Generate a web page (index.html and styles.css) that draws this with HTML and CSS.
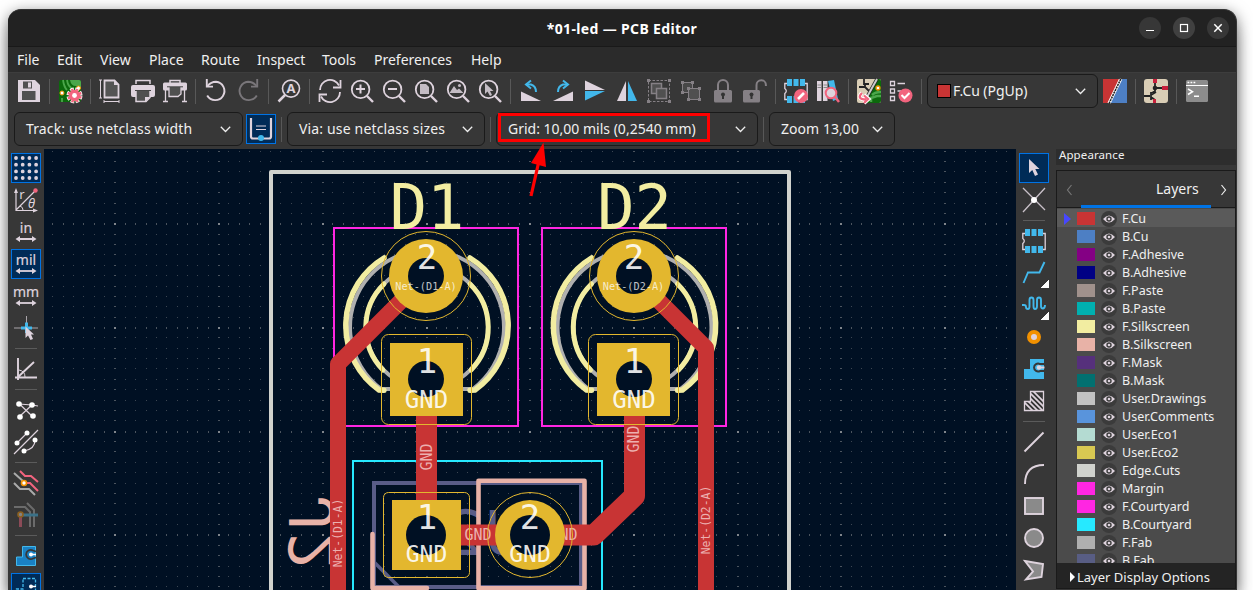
FILE: index.html
```html
<!DOCTYPE html>
<html lang="en">
<head>
<meta charset="utf-8">
<title>PCB Editor</title>
<link rel="stylesheet" href="styles.css">
</head>
<body>
<svg class="defs" width="0" height="0">
  <defs>
    <g id="lens"><circle cx="10.6" cy="10.4" r="8.8" fill="none" stroke="#ded3dd" stroke-width="1.8"/><path d="M17 17l6 6" stroke="#ded3dd" stroke-width="2.4"/></g>
    <g id="harrow"><path d="M3 19.5H21" stroke="#ded3dd" stroke-width="1.8"/><path d="M6 16.5L1.500 19.500L6 22.500ZM18 16.500L22.500 19.500L18 22.500Z" fill="#ded3dd"/></g>
    <g id="chip"><path d="M3.500 4.500H.8V9.500q3 2.500 0 5V20.500H3.500M20.500 4.500H23.200V20.500H20.500" fill="none" stroke="#ded3dd" stroke-width="1.300"/><path d="M3 0H8V7H3ZM9.500 0H14.500V7H9.500ZM16 0H21V7H16ZM3 17H8V24H3ZM9.500 17H14.500V24H9.500ZM16 17H21V24H16Z" fill="#42b8eb"/></g>
    <g id="eye"><circle cx="8" cy="8" r="8" fill="#3b3b3b"/><path d="M2 8Q8 1 14 8Q8 15 2 8Z" fill="#ded3dd"/><circle cx="8" cy="8" r="2.700" fill="#3b3b3b"/><circle cx="8" cy="8" r="1.300" fill="#ded3dd"/></g>
  </defs>
</svg>

<div class="window">
  <header class="titlebar">
    <div class="title">*01-led — PCB Editor</div>
    <div class="controls">
      <span class="ctl"><svg viewBox="0 0 22 22"><path d="M7 13.500H15" stroke="#fff" stroke-width="1.200"/></svg></span>
      <span class="ctl lit"><svg viewBox="0 0 22 22"><rect x="7.500" y="7.500" width="7" height="7" fill="none" stroke="#fff" stroke-width="1.200"/></svg></span>
      <span class="ctl"><svg viewBox="0 0 22 22"><path d="M7.300 7.300L14.700 14.700M14.700 7.300L7.300 14.700" stroke="#fff" stroke-width="1.500"/></svg></span>
    </div>
  </header>
  <nav class="menu"><span>File</span><span>Edit</span><span>View</span><span>Place</span><span>Route</span><span>Inspect</span><span>Tools</span><span>Preferences</span><span>Help</span></nav>

  <div class="toolbar first">
    <svg class="ic" viewBox="0 0 24 24"><path d="M1 1H18L23 6V23H1Z" fill="#ded3dd"/><rect x="5" y="12" width="13.500" height="9" fill="#505050"/><rect x="6" y="2.500" width="9" height="7" fill="#505050"/><rect x="11" y="3.500" width="3" height="5" fill="#ded3dd"/></svg>
    <i class="sep"></i>
    <svg class="ic" viewBox="0 0 24 24"><rect x="1" y="1" width="22" height="22" rx="2" fill="#0c690c"/><path d="M12 1H21Q23 1 23 3V10L18 7Q13 7 12 1Z" fill="#4ba64b"/><path d="M5 1Q6 8 9 11M9 1Q10 8 15 10M4 23V19" stroke="#4ba64b" stroke-width="1.800" fill="none"/><circle cx="4" cy="14" r="2" fill="#fff" stroke="#f29100"/><circle cx="20.500" cy="9" r="2" fill="#fff" stroke="#f29100"/><circle cx="16.500" cy="16.500" r="6.300" fill="none" stroke="#fff" stroke-width="3.400" stroke-dasharray="3.500 1.450"/><circle cx="16.500" cy="16.500" r="5.800" fill="#f2647e"/><circle cx="16.500" cy="16.500" r="6.200" fill="none" stroke="#f2647e" stroke-width="2" stroke-dasharray="2.300 2.570" stroke-dashoffset="-.6"/><circle cx="16.500" cy="16.500" r="2.400" fill="#fff"/></svg>
    <i class="sep"></i>
    <svg class="ic" viewBox="0 0 24 24"><path d="M5.500 1.500H15.500L19.500 5.500V18.500H5.500Z" fill="#545454" stroke="#ded3dd" stroke-width="1.800"/><path d="M15 1V6H20Z" fill="#ded3dd"/><path d="M1.500 1V19M0 1H3M0 19H3M5 22.500H20M5 21V24M20 21V24" stroke="#ded3dd" fill="none"/></svg>
    <svg class="ic" viewBox="0 0 24 24"><path d="M5 5V1.500H19V5" fill="#373737" stroke="#ded3dd" stroke-width="1.500"/><rect y="6" width="24" height="12" rx="2" fill="#ded3dd"/><path d="M4 11.500H20" stroke="#444" stroke-width="1.200"/><path d="M5 12V22.500H15L19 18.500V12" fill="#505050" stroke="#ded3dd" stroke-width="1.500"/><path d="M14 23V18H19Z" fill="#ded3dd"/></svg>
    <svg class="ic" viewBox="0 0 24 24"><path d="M7 4V1.500H17V4" fill="none" stroke="#ded3dd" stroke-width="1.500"/><rect y="3.500" width="24" height="8" rx="1.500" fill="#ded3dd"/><path d="M2.500 11V23M21.500 11V23M0 22.500H5M19 22.500H24" stroke="#ded3dd" stroke-width="1.300"/><path d="M6 8V17.500H15L18 15V8" fill="#505050" stroke="#ded3dd" stroke-width="1.300"/><path d="M4 7.800H20" stroke="#444"/></svg>
    <i class="sep"></i>
    <svg class="ic" viewBox="0 0 24 24"><path d="M3.500 7Q7 2.800 12 2.800A9.200 9.200 0 1 1 3.200 16.500" fill="none" stroke="#ded3dd" stroke-width="1.900"/><path d="M2.800 0V7.600H9" fill="none" stroke="#ded3dd" stroke-width="1.900"/></svg>
    <svg class="ic" viewBox="0 0 24 24"><path d="M20.500 7Q17 2.800 12 2.800A9.200 9.200 0 1 0 20.800 16.500" fill="none" stroke="#79767a" stroke-width="1.900"/><path d="M21.200 0V7.600H15" fill="none" stroke="#79767a" stroke-width="1.900"/></svg>
    <i class="sep"></i>
    <svg class="ic" viewBox="0 0 24 24"><circle cx="14" cy="9.600" r="8.500" fill="none" stroke="#ded3dd" stroke-width="1.600"/><path d="M8 16L1.500 22.500" stroke="#ded3dd" stroke-width="2.500"/><text x="14" y="14.200" class="findA">A</text></svg>
    <i class="sep"></i>
    <svg class="ic" viewBox="0 0 24 24"><path d="M2 11A10 10 0 0 1 21 6.500M22 13A10 10 0 0 1 3 17.500" fill="none" stroke="#ded3dd" stroke-width="1.800"/><path d="M22.500 1V8.500H15M1.500 23V15.500H9" fill="none" stroke="#ded3dd" stroke-width="1.800"/></svg>
    <svg class="ic" viewBox="0 0 24 24"><use href="#lens"/><path d="M6 10H15M10.500 5.500V14.500" stroke="#ded3dd" stroke-width="2"/></svg>
    <svg class="ic" viewBox="0 0 24 24"><use href="#lens"/><path d="M6 10H15" stroke="#ded3dd" stroke-width="2"/></svg>
    <svg class="ic" viewBox="0 0 24 24"><use href="#lens"/><path d="M6 5H12L15 8V15H6Z" fill="#c4bcc4"/></svg>
    <svg class="ic" viewBox="0 0 24 24"><use href="#lens"/><path d="M3.500 14L8 7L11 11L13 9.500L17.500 14Z" fill="#c4bcc4"/><circle cx="13.500" cy="6.500" r="1.500" fill="#c4bcc4"/></svg>
    <svg class="ic" viewBox="0 0 24 24"><use href="#lens"/><path d="M7 4V15L9.500 12.500L12 17L14 16L12 12H15.500Z" fill="#c4bcc4"/></svg>
    <i class="sep"></i>
    <svg class="ic" viewBox="0 0 24 24"><path d="M2 12.500V22H22Z" fill="#ded3dd"/><path d="M8 5.500H12Q17 7 17 13" fill="none" stroke="#42b8eb" stroke-width="2"/><path d="M12 1.500L7 5.500L12 9.500" fill="none" stroke="#42b8eb" stroke-width="2"/></svg>
    <svg class="ic" viewBox="0 0 24 24"><path d="M22 12.500V22H2Z" fill="#ded3dd"/><path d="M16 5.500H12Q7 7 7 13" fill="none" stroke="#42b8eb" stroke-width="2"/><path d="M12 1.500L17 5.500L12 9.500" fill="none" stroke="#42b8eb" stroke-width="2"/></svg>
    <svg class="ic" viewBox="0 0 24 24"><path d="M2 1.500V11H22Z" fill="#ded3dd"/><path d="M2 12V21.500L22 12Z" fill="#42b8eb"/></svg>
    <svg class="ic" viewBox="0 0 24 24"><path d="M11 2V22H2Z" fill="#ded3dd"/><path d="M13 2V22H22Z" fill="#42b8eb"/></svg>
    <svg class="ic" viewBox="0 0 24 24"><rect x="1.500" y="1.500" width="21" height="21" fill="none" stroke="#858085" stroke-dasharray="2.500 1.500"/><path d="M0 0H3V3H0ZM21 0H24V3H21ZM0 21H3V24H0ZM21 21H24V24H21Z" fill="#858085"/><rect x="4.500" y="4.500" width="10" height="10" fill="#505050" stroke="#858085" stroke-width="1.500"/><rect x="9.500" y="9.500" width="10" height="10" fill="#505050" stroke="#858085" stroke-width="1.500"/></svg>
    <svg class="ic" viewBox="0 0 24 24"><rect x="3.500" y="3.500" width="10" height="10" fill="#484848" stroke="#858085"/><rect x="9.500" y="9.500" width="11" height="11" fill="#505050" stroke="#858085"/><path d="M2 2H5V5H2ZM12 2H15V5H12ZM2 12H5V15H2ZM8 8H11V11H8ZM19 8H22V11H19ZM8 19H11V22H8ZM19 19H22V22H19Z" fill="#858085"/></svg>
    <svg class="ic" viewBox="0 0 24 24"><rect x="3" y="11" width="18" height="12.500" rx="1.500" fill="#858085"/><path d="M7 11V6a5 5 0 0 1 10 0V11" fill="none" stroke="#858085" stroke-width="2"/><circle cx="12" cy="15.500" r="2" fill="#333"/><path d="M12 16V20" stroke="#333" stroke-width="2"/></svg>
    <svg class="ic" viewBox="0 0 24 24"><rect y="11" width="17" height="12.500" rx="1.500" fill="#858085"/><path d="M13.500 11V6a4.700 4.700 0 0 1 9.400 0V7" fill="none" stroke="#858085" stroke-width="2"/><circle cx="8.500" cy="15.500" r="2" fill="#333"/><path d="M8.500 16V20" stroke="#333" stroke-width="2"/></svg>
    <i class="sep"></i>
    <svg class="ic" viewBox="0 0 24 24"><use href="#chip"/><circle cx="17" cy="17" r="7" fill="#f2647e"/><path d="M14 20L20 14" stroke="#fff" stroke-width="2.600"/></svg>
    <svg class="ic" viewBox="0 0 24 24"><path d="M1 2H5.500V22H1ZM7 2H11.500V22H7Z" fill="#ded3dd"/><path d="M12 2L18 1L22 20L17 22Z" fill="#42b8eb"/><path d="M1.500 6H5M1.500 8.500H5M7.500 6H11M7.500 8.500H11" stroke="#888"/><circle cx="15" cy="14" r="5.300" fill="#ded3dd" stroke="#f2647e" stroke-width="2"/><path d="M19 18L23 23" stroke="#f2647e" stroke-width="2.500"/></svg>
    <i class="sep"></i>
    <svg class="ic" viewBox="0 0 24 24"><rect width="24" height="24" rx="2" fill="#d9cdb5"/><path d="M20 0H22Q24 0 24 2V22Q24 24 22 24H9L11 18Z" fill="#0c690c"/><path d="M15 16Q18 13 24 13M14 23V19L20 17H24" stroke="#4ba64b" stroke-width="2.500" fill="none"/><path d="M7 0V5H12M2 8H8L12 12M8 5V9" stroke="#222" stroke-width="1.800" fill="none"/><path d="M20 0L10 18" stroke="#222" stroke-width="3.500"/><path d="M20 0L10 18" stroke="#ccc" stroke-width="2"/><circle cx="21" cy="9" r="2" fill="#fff" stroke="#f29100" stroke-width="1.300"/><path d="M5 14Q-1 20 9 20.500M7 16L11.500 20L7 24" fill="none" stroke="#fff" stroke-width="4"/><path d="M5 14Q-1 20 9 20.500M7 16.500L11 20L7 24" fill="none" stroke="#f2647e" stroke-width="2.300"/></svg>
    <svg class="ic" viewBox="0 0 24 24"><path d="M1.500 2.500H5.500V6.500H1.500ZM1.500 10H5.500V14H1.500ZM1.500 17.500H5.500V21.500H1.500Z" fill="none" stroke="#ded3dd" stroke-width="1.300"/><path d="M8.500 4.500H16M8.500 12H12" stroke="#ded3dd" stroke-width="1.500"/><circle cx="16.500" cy="16.500" r="7" fill="#f2647e"/><path d="M12.500 16L15.500 19L20.500 14" fill="none" stroke="#fff" stroke-width="2"/></svg>
    <i class="sep"></i>
    <div class="combo layer"><b class="chip"></b><span>F.Cu (PgUp)</span><svg class="chev" viewBox="0 0 11 7"><path d="M.8 .8L5.500 5.500L10.200 .8"/></svg></div>
    <svg class="ic pair" viewBox="0 0 24 24"><path d="M0 0H17L5 24H0Z" fill="#c83434"/><path d="M19 0H24V24H7Z" fill="#4d7fc4"/><path d="M16.500 0L5 24" stroke="#fff" stroke-width="1.100"/><path d="M18.300 0L6.800 24" stroke="#fff" stroke-width="2"/><path d="M17.800 0L6.300 24" stroke="#222" stroke-width="1.500" stroke-dasharray="2 .8"/></svg>
    <i class="sep"></i>
    <svg class="ic" viewBox="0 0 24 24"><rect width="24" height="24" rx="3" fill="#d9cdb5"/><path d="M11 3V9M11 9H19M11 7V12L8 14M0 17H6M7 13V21M7 16L12 13M7 18L11 21V24" stroke="#222" stroke-width="1.800" fill="none"/><path d="M9 0H13V4H9ZM18 7H24V11H18ZM9 20H12V24H9Z" fill="#c8203c"/><circle cx="11" cy="9" r="2.300" fill="#222"/></svg>
    <i class="sep"></i>
    <svg class="ic" viewBox="0 0 24 24"><rect x="1" y="1" width="22" height="22" rx="1.500" fill="#8c8c8c"/><path d="M1 6.500H23" stroke="#fff" stroke-width="1.200"/><path d="M2.500 3.500H11" stroke="#fff" stroke-width="1.700" stroke-dasharray="1.800 1.200"/><path d="M3 10L7.500 12.700L3 15.500M9 17.300H14" stroke="#fff" stroke-width="1.500" fill="none"/></svg>
  </div>

  <div class="toolbar second">
    <div class="combo track"><span>Track: use netclass width</span><svg class="chev" viewBox="0 0 11 7"><path d="M.8 .8L5.500 5.500L10.200 .8"/></svg></div>
    <div class="btn on"><svg class="ic" viewBox="0 0 24 24"><path d="M2 1V19.500Q2 21.500 4 21.500H20Q22 21.500 22 19.500V1" fill="none" stroke="#ded3dd" stroke-width="2.200"/><path d="M7 9H17M7 12.500H17" stroke="#ded3dd" stroke-width="1.200"/><circle cx="12" cy="21" r="3" fill="#42b8eb"/></svg></div>
    <i class="sep"></i>
    <div class="combo via"><span>Via: use netclass sizes</span><svg class="chev" viewBox="0 0 11 7"><path d="M.8 .8L5.500 5.500L10.200 .8"/></svg></div>
    <i class="sep"></i>
    <div class="combo grid"><span>Grid: 10,00 mils (0,2540 mm)</span><svg class="chev" viewBox="0 0 11 7"><path d="M.8 .8L5.500 5.500L10.200 .8"/></svg></div>
    <i class="sep"></i>
    <div class="combo zoom"><span>Zoom 13,00</span><svg class="chev" viewBox="0 0 11 7"><path d="M.8 .8L5.500 5.500L10.200 .8"/></svg></div>
  </div>

  <main class="work">
    <aside class="side left">
      <div class="btn on"><svg class="ic" viewBox="0 0 24 24"><g stroke="#ded3dd" stroke-width="3.800" stroke-linecap="round" stroke-dasharray="0 6.700"><path d="M2 2H23"/><path d="M2 8.700H23"/><path d="M2 15.400H23"/><path d="M2 22H23"/></g></svg></div>
      <div class="btn"><svg class="ic" viewBox="0 0 24 24"><path d="M2 2V22.500H22M2 22L21 3" fill="none" stroke="#ded3dd" stroke-width="1.200"/><path d="M0 5L2 0L4 5ZM19 20.500L24 22.500L19 24.500Z" fill="#ded3dd"/><circle cx="21.500" cy="2.500" r="2.200" fill="#f2647e"/><path d="M6 18Q9 19 9 22" stroke="#ded3dd" fill="none"/><text x="8" y="11" class="polar">r</text><text x="17.500" y="20" class="polar theta">θ</text></svg></div>
      <div class="btn"><svg class="ic" viewBox="0 0 24 24"><text x="12" y="12.500" class="unit">in</text><use href="#harrow" y="-.5"/></svg></div>
      <div class="btn on"><svg class="ic" viewBox="0 0 24 24"><text x="12" y="12.500" class="unit">mil</text><use href="#harrow" y="-.5"/></svg></div>
      <div class="btn"><svg class="ic" viewBox="0 0 24 24"><text x="12" y="12.500" class="unit">mm</text><use href="#harrow" y="-.5"/></svg></div>
      <div class="btn"><svg class="ic" viewBox="0 0 24 24"><path d="M0 12H24M12.500 0V12" stroke="#aaa5aa"/><path d="M7 12H18M12.500 6.500V17" stroke="#42b8eb" stroke-width="3"/><path d="M11.500 10.500V22L14 19.500L16.500 24L19 23L17 18.500H20Z" fill="#ded3dd"/></svg></div>
      <i class="hsep"></i>
      <div class="btn"><svg class="ic" viewBox="0 0 24 24"><path d="M4 1V23M1 20.500H23M4 20L20 5" fill="none" stroke="#ded3dd" stroke-width="1.900"/><path d="M5 13Q11 14 11 20" fill="none" stroke="#ded3dd"/></svg></div>
      <i class="hsep"></i>
      <div class="btn"><svg class="ic" viewBox="0 0 24 24"><path d="M5 5.500L18 18M5 6L18 7L24 8M6 18L18 7" stroke="#ded3dd" stroke-width="1.200" fill="none"/><g fill="#fff"><circle cx="5" cy="6" r="2.800"/><circle cx="18" cy="7" r="2.800"/><circle cx="6" cy="19" r="2.800"/><circle cx="19" cy="18" r="2.800"/></g></svg></div>
      <div class="btn"><svg class="ic" viewBox="0 0 24 24"><path d="M0 24L24 0M3 13L13 3M21 10Q21 19 10 21" stroke="#ded3dd" stroke-width="1.200" fill="none"/><g fill="#fff"><circle cx="3" cy="13" r="2.500"/><circle cx="13" cy="3" r="2.500"/><circle cx="21" cy="10" r="2.500"/><circle cx="10" cy="21" r="2.500"/></g></svg></div>
      <i class="hsep"></i>
      <div class="btn"><svg class="ic" viewBox="0 0 24 24"><path d="M0 2L10 11M0 12L6 18H15L21 24" fill="none" stroke="#aaa" stroke-width="2"/><path d="M6 0L11 5H17L24 11M11 12H16L24 20" fill="none" stroke="#f2647e" stroke-width="2"/><circle cx="10" cy="12" r="2.500" fill="#fff" stroke="#f29100" stroke-width="1.600"/></svg></div>
      <div class="btn dim"><svg class="ic" viewBox="0 0 24 24"><path d="M0 4H11L16 9V24M13 0L20 7V24" fill="none" stroke="#aaa" stroke-width="2"/><path d="M7 12H24" stroke="#42b8eb" stroke-width="3"/><path d="M6.500 12V24" stroke="#f2647e" stroke-width="3"/><circle cx="6.500" cy="11.500" r="2.500" fill="#ddd" stroke="#f29100" stroke-width="1.600"/></svg></div>
      <i class="hsep"></i>
      <div class="btn"><svg class="ic" viewBox="0 0 24 24"><path d="M8.500 2.500H21.500V21.500H2.500V13H8.500Z" fill="#1a81c4" stroke="#42b8eb"/><path d="M22 7.500L19 6.500A4.600 4.600 0 1 0 19 14.500L22 13.500" fill="none" stroke="#373737" stroke-width="1.800"/><circle cx="17" cy="10.500" r="2" fill="#fff"/><path d="M17 10.500H22" stroke="#fff" stroke-width="1.500"/></svg></div>
      <div class="btn on"><svg class="ic" viewBox="0 0 24 24"><path d="M9 2.500H21.500V21.500H2.500V13H9Z" fill="none" stroke="#42b8eb" stroke-width="1.300" stroke-dasharray="3 1.500"/><circle cx="17" cy="10.500" r="2" fill="#fff"/><path d="M17 10.500H22" stroke="#fff" stroke-width="1.500"/></svg></div>
    </aside>

    <svg class="board" viewBox="44 149 972 441">
      <g id="dots" shape-rendering="crispEdges"></g>
      <g fill="none">
        <rect x="374" y="483" width="207" height="104" stroke="#595c87" stroke-width="4"/>
        <path d="M374 562L399 587" stroke="#595c87" stroke-width="3.500"/>
      </g>
      <g class="ref bfab" transform="matrix(-1 0 0 1 483 555)"><text class="jay" x="-19">J</text><text x="19">2</text></g>
      <g class="ref bsilk" transform="matrix(0 1 1 0 334 532)"><text class="jay" x="-19">J</text><text x="19">2</text></g>
      <g fill="none" stroke="#e8b2a7" stroke-width="4.600" stroke-linejoin="round" stroke-linecap="round">
        <rect x="478.500" y="480.700" width="106" height="107.500"/><path d="M372.500 534V588H427"/>
      </g>
      <path d="M353 590V461H602V590" fill="none" stroke="#26e9ff" stroke-width="2"/>
      <g fill="none" stroke="#ff26e2" stroke-width="2"><rect x="334" y="228" width="184" height="198"/><rect x="542" y="228" width="184" height="198"/></g>
      <g id="led" fill="none">
        <g stroke="#afafaf"><path d="M381 389A77 77 0 1 1 473 389Z" stroke-width="4"/><circle cx="427" cy="327" r="61" stroke-width="4"/></g>
        <g stroke="#f2eda1" stroke-linecap="round"><path d="M384 258A79 79 0 0 0 379 390L384 390.300M470 258A79 79 0 0 1 475 390L470 390.300" stroke-width="5.500"/><path d="M384 284A61 61 0 0 0 383 370M470 284A61 61 0 0 1 471 370" stroke-width="5"/></g>
      </g>
      <use href="#led" x="207.500"/>
      <path d="M271 600V172H789V600" fill="none" stroke="#d0d2cd" stroke-width="4" stroke-linejoin="round"/>
      <g class="ref"><text x="427" y="229">D1</text><text x="634.500" y="229">D2</text></g>
      <g fill="none" stroke="#c83434" stroke-linejoin="round">
        <path d="M426 276L338 364V600M634 276L706 348V600" stroke-width="16"/>
        <path d="M426.500 400V535H594L634.500 496V400" stroke-width="21"/>
      </g>
      <g class="net">
        <text class="s" transform="translate(342 533) rotate(-90)">Net-(D1-A)</text><text class="s" transform="translate(710 520) rotate(-90)">Net-(D2-A)</text>
        <text transform="translate(431.500 457) rotate(-90)">GND</text><text transform="translate(638.500 439) rotate(-90)">GND</text>
        <text x="478" y="540">GND</text><text x="564" y="540">GND</text>
      </g>
      <g fill="#e3b72e">
        <circle cx="426" cy="276" r="37"/><circle cx="634" cy="276" r="37"/><rect x="390" y="343" width="73" height="73"/><rect x="597" y="343" width="73" height="73"/>
        <rect x="392" y="500" width="69" height="70"/><circle cx="530" cy="535" r="35"/>
      </g>
      <g fill="none" stroke="#e3b72e">
        <circle cx="426" cy="276" r="44.500"/><circle cx="634" cy="276" r="44.500"/><rect x="381.500" y="334.500" width="90" height="90" rx="7"/><rect x="588.500" y="334.500" width="90" height="90" rx="7"/>
        <rect x="383.500" y="492.500" width="86" height="85" rx="5"/><circle cx="530" cy="535" r="42.500"/>
      </g>
      <g fill="#001023"><circle cx="426" cy="276" r="18"/><circle cx="634" cy="276" r="18"/><circle cx="426" cy="379" r="18"/><circle cx="634" cy="379" r="18"/><circle cx="426" cy="535" r="20"/><circle cx="530" cy="535" r="20"/></g>
      <g class="pad">
        <text class="n" x="427" y="269">2</text><text class="n" x="634" y="269">2</text><text class="n" x="427" y="372.500">1</text><text class="n" x="634" y="372.500">1</text>
        <text class="n" x="427" y="528.500">1</text><text class="n" x="530" y="528.500">2</text>
        <text x="426.500" y="408">GND</text><text x="634" y="408">GND</text><text class="j" x="426.500" y="562">GND</text><text class="j" x="530" y="562">GND</text>
        <text class="t" x="426" y="290">Net-(D1-A)</text><text class="t" x="633.500" y="290">Net-(D2-A)</text>
      </g>
    </svg>

    <aside class="side right">
      <div class="btn on"><svg class="ic" viewBox="0 0 24 24"><path d="M7 3V17L10.300 14L13 20L16 18.500L13.300 13H17.500Z" fill="#ded3dd"/></svg></div>
      <div class="btn"><svg class="ic" viewBox="0 0 24 24"><path d="M1 0L23 22M23 0L1 24" stroke="#c8c0c8" stroke-width="1.300"/><circle cx="12" cy="12" r="3" fill="#fff"/></svg></div>
      <i class="hsep"></i>
      <div class="btn"><svg class="ic" viewBox="0 0 24 24"><use href="#chip"/></svg></div>
      <div class="btn more"><svg class="ic" viewBox="0 0 24 24"><path d="M1.500 22L6 11.500H17.500L22.500 1" fill="none" stroke="#42b8eb" stroke-width="1.900"/></svg></div>
      <div class="btn more"><svg class="ic" viewBox="0 0 24 24"><path d="M0 12H2Q4 12 4 14Q4 16 6 16Q7.500 16 7.500 13V7Q7.500 4.500 9.500 4.500Q11.500 4.500 11.500 7V13Q11.500 16 13 16Q15 16 15 13V7Q15 4.500 17 4.500Q19 4.500 19 7V13Q19 15.500 21 15.500Q23 15 23 12" fill="none" stroke="#42b8eb" stroke-width="1.900"/></svg></div>
      <div class="btn"><svg class="ic" viewBox="0 0 24 24"><circle cx="12" cy="12" r="5" fill="#ded3dd" stroke="#f29100" stroke-width="4"/></svg></div>
      <div class="btn"><svg class="ic" viewBox="0 0 24 24"><path d="M8 2H22V22H2V12H8Z" fill="#42b8eb"/><path d="M22.500 7H18A4 4 0 1 0 18 14H22.500" fill="none" stroke="#373737" stroke-width="2"/><circle cx="17" cy="10.500" r="2.200" fill="#ded3dd"/><path d="M17 10.500H22.500" stroke="#ded3dd" stroke-width="2"/></svg></div>
      <div class="btn"><svg class="ic" viewBox="0 0 24 24"><clipPath id="zc"><path d="M8 2H22V22H2V12H8Z"/></clipPath><path d="M-10 -4L20 26M-5 -4L25 26M0 -4L30 26M5 -4L35 26M-15 -4L15 26" clip-path="url(#zc)" stroke="#ded3dd" stroke-width="1.700"/><path d="M8.500 2.500H21.500V21.500H2.500V12.500H8.500Z" fill="none" stroke="#ded3dd" stroke-width="1.300"/></svg></div>
      <i class="hsep"></i>
      <div class="btn"><svg class="ic" viewBox="0 0 24 24"><path d="M2.500 21.500L21.500 2.500" stroke="#ded3dd" stroke-width="1.900"/></svg></div>
      <div class="btn"><svg class="ic" viewBox="0 0 24 24"><path d="M3 22Q3 3 22 3" fill="none" stroke="#ded3dd" stroke-width="1.900"/></svg></div>
      <div class="btn"><svg class="ic" viewBox="0 0 24 24"><rect x="3" y="4" width="18" height="16" fill="#8a8a8a" stroke="#ded3dd" stroke-width="1.900"/></svg></div>
      <div class="btn"><svg class="ic" viewBox="0 0 24 24"><circle cx="12" cy="12" r="9" fill="#8a8a8a" stroke="#ded3dd" stroke-width="1.900"/></svg></div>
      <div class="btn"><svg class="ic" viewBox="0 0 24 24"><path d="M3 3L21 6L19.500 19L4 21.500L11 13.500Z" fill="#8a8a8a" stroke="#ded3dd" stroke-width="1.900"/></svg></div>
    </aside>

    <section class="panel">
      <div class="caption">Appearance</div>
      <div class="book">
        <div class="tabs">
          <svg class="nav off" viewBox="0 0 7 12"><path d="M5.500 1L1.500 6L5.500 11"/></svg>
          <div class="tab">Layers</div>
          <svg class="nav" viewBox="0 0 7 12"><path d="M1.500 1L5.500 6L1.500 11"/></svg>
        </div>
        <div class="layers" id="layers"></div>
        <div class="options"><i></i>Layer Display Options</div>
      </div>
    </section>
  </main>
</div>
<svg class="mark" viewBox="0 0 212 84" width="212" height="84"><rect x="1.500" y="1.500" width="209" height="26" fill="none" stroke="#f00" stroke-width="3"/><path d="M33 83L40.500 50" stroke="#f00" stroke-width="3.200"/><path d="M45.500 29.500L48 54L33 50Z" fill="#f00"/></svg>
<script src="app.js"></script>
</body>
</html>
```
FILE: styles.css
```css
* { box-sizing: border-box; }
html { height: 590px; overflow: hidden; }
body { margin: 0; width: 1253px; height: 590px; overflow: hidden; background: #fff; font: 14px/20px "Noto Sans", sans-serif; color: #f0f0f0; padding: 9px 16px 0 8px; position: relative; }
.defs { position: absolute; }
.window { height: 581px; width: 1229px; background: #373737; border-radius: 13px 13px 0 0; border: solid #353535; border-width: 1px 1px 0 0; box-shadow: 0 4px 15px rgba(0,0,0,.55), 0 20px 15px rgba(0,0,0,.2); overflow: hidden; }
.titlebar { height: 37px; background: #222; border-bottom: 1px solid #191919; display: grid; grid-template-columns: 1fr; align-items: center; }
.titlebar > * { grid-area: 1 / 1; }
.title { text-align: center; font-weight: 700; font-size: 14px; letter-spacing: .35px; color: #fff; padding-top: 2px; }
.controls { display: flex; gap: 12px; justify-content: flex-end; padding-right: 7px; }
.ctl { width: 22px; height: 22px; border-radius: 50%; background: #373737; }
.ctl.lit { background: #404040; }
.ctl svg { display: block; width: 22px; height: 22px; }
.menu { height: 25px; background: #2b2b2b; padding-left: 9px; display: grid; grid-template-columns: 40px 43px 49px 52px 56px 65px 52px 97px 40px; line-height: 26px; font-size: 14px; white-space: nowrap; }
.toolbar { height: 38px; padding-left: 9px; display: flex; align-items: center; gap: 8px; }
.first { border-top: 1px solid #3d3d3d; padding-bottom: 1px; }
.ic { width: 24px; height: 24px; flex: none; display: block; overflow: visible; }
.sep { width: 1px; height: 25px; background: #585858; flex: none; }
.combo { height: 34px; border: 1px solid #1a1a1a; border-radius: 6px; display: flex; align-items: center; justify-content: space-between; padding: 0 11px; white-space: nowrap; flex: none; }
.chev { width: 11px; height: 7px; }
.chev path { fill: none; stroke: #eee; stroke-width: 1.3; }
.layer { width: 171px; margin: 0 -3px; padding-left: 9px; }
.layer span { flex: 1; padding-left: 2px; letter-spacing: -.05px; }
.chip { width: 14px; height: 14px; background: #c83434; border: 1px solid #000; }
.second { padding-left: 6px; gap: 5px; height: 39px; align-items: flex-start; padding-top: 2px; }
.second .sep { margin-top: 5px; }
.second .btn { margin: 2px 0 0 -2px; }
.track { width: 229px; letter-spacing: .14px; }
.via { width: 198px; letter-spacing: .16px; }
.grid { width: 262px; }
.zoom { width: 126px; letter-spacing: .05px; }
.btn { width: 30px; height: 30px; padding: 3px; flex: none; }
.btn.on { background: #002b57; border: 1px solid #0073e5; padding: 2px; }
.btn.dim svg { opacity: .45; }
.btn.more { background: linear-gradient(135deg, transparent 50%, #fff 50%) right bottom / 8px 8px no-repeat; }
.work { display: grid; grid-template-columns: 36px 972px 40px 1fr; height: 441px; }
.side { display: flex; flex-direction: column; gap: 2px; padding: 4px 3px 0; height: 441px; overflow: hidden; }
.hsep { height: 1px; width: 22px; margin: 3px 4px; background: #5b5b5b; flex: none; }
.board { background: #001023; width: 972px; height: 441px; display: block; }
text { text-anchor: middle; font-family: "DejaVu Sans Mono", monospace; }
.findA { font: 700 13px "Noto Sans", sans-serif; fill: #ded3dd; }
.polar { font: 13px "Noto Sans", sans-serif; fill: #ded3dd; }
.theta { font-style: italic; }
.unit { font: 14px "Noto Sans", sans-serif; fill: #ded3dd; stroke: #ded3dd; stroke-width: .2; }
.ref text { font-size: 62px; fill: #f2eda1; }
.ref .jay { font-family: Inter, sans-serif; }
.bfab text { fill: #595c87; }
.bsilk text { fill: #e8b2a7; }
.net text { font-size: 15px; fill: #ecb0b0; }
.net .s { font-size: 11.4px; }
.pad text { font-size: 24px; fill: #fff; fill-opacity: .9; }
.pad .n { font-size: 34px; }
.pad .j { font-size: 23px; }
.pad .t { font-size: 10.2px; fill-opacity: .75; }
.panel { height: 441px; padding-right: 2px; }
.caption { height: 16px; line-height: 12px; font-size: 11.5px; background: #2d2d2d; padding-left: 3px; letter-spacing: .1px; }
.book { margin-top: 5px; height: 419px; border: 1px solid #1a1a1a; background: #373737; }
.tabs { height: 37px; display: grid; grid-template-columns: 24px 130px 24px; align-items: center; border-bottom: 1px solid #1a1a1a; }
.tab { height: 37px; line-height: 36px; border-bottom: 3px solid #0073e5; padding-left: 75px; font-size: 14px; }
.nav { width: 7px; height: 12px; justify-self: center; }
.nav path { fill: none; stroke: #eee; stroke-width: 1.2; }
.nav.off path { stroke: #777; }
.layers { height: 355px; background: #4b4b4b; overflow: hidden; padding-top: 1px; }
.row { height: 18px; display: grid; grid-template-columns: 7px 18px 16px 1fr; column-gap: 6px; align-items: center; padding-left: 7px; font-size: 12.5px; line-height: 18px; white-space: nowrap; }
.row span:last-child { padding-top: 1px; margin-left: -1px; }
.row.cur { background: #5a5a5a; }
.row.cur .arrow { border-left: 7px solid #4747ff; border-top: 6px solid transparent; border-bottom: 6px solid transparent; }
.swatch { width: 18px; height: 13px; margin-top: -1px; }
.row svg { width: 16px; height: 16px; }
.options { height: 25px; background: #242424; display: flex; align-items: center; padding: 2px 0 0 13px; gap: 2px; font-size: 13px; white-space: nowrap; }
.options i { border-left: 5px solid #fff; border-top: 5px solid transparent; border-bottom: 5px solid transparent; }
.mark { position: absolute; left: 498px; top: 113px; }
```
FILE: app.js
```js
const layers = [
  ["F.Cu", "#c83434"], ["B.Cu", "#4d7fc4"], ["F.Adhesive", "#840084"], ["B.Adhesive", "#000084"],
  ["F.Paste", "#a0918c"], ["B.Paste", "#00b0b0"], ["F.Silkscreen", "#f2eda1"], ["B.Silkscreen", "#e8b2a7"],
  ["F.Mask", "#56307c"], ["B.Mask", "#027070"], ["User.Drawings", "#c2c2c2"], ["User.Comments", "#5994dc"],
  ["User.Eco1", "#b4dbd2"], ["User.Eco2", "#d8c852"], ["Edge.Cuts", "#d0d2cd"], ["Margin", "#ff26e2"],
  ["F.Courtyard", "#ff26e2"], ["B.Courtyard", "#26e9ff"], ["F.Fab", "#afafaf"], ["B.Fab", "#585d84"]
];
document.getElementById("layers").innerHTML = layers.map(([name, color], i) =>
  `<div class="row${i ? "" : " cur"}"><span class="arrow"></span><span class="swatch" style="background:${color}"></span><svg viewBox="0 0 16 16"><use href="#eye"/></svg><span>${name}</span></div>`
).join("");

// Grid dots: every tenth row and column is emphasised.
const step = 10.37;
let dots = "";
for (let r = -8; r <= 35; r++) {
  for (let c = -36; c <= 56; c++) {
    const x = Math.round(425.5 + c * step), y = Math.round(223.3 + r * step);
    const mx = c % 10 === 0, my = r % 10 === 0;
    if (x < 44 || y < 149 || x > 1015 || y > 589) continue;
    dots += `<rect x="${x}" y="${y}" width="${mx ? 2 : 1}" height="${my ? 2 : 1}" fill="${mx && my ? "#80858b" : mx || my ? "#4b545e" : "#3c4652"}"/>`;
  }
}
document.getElementById("dots").innerHTML = dots;
```
